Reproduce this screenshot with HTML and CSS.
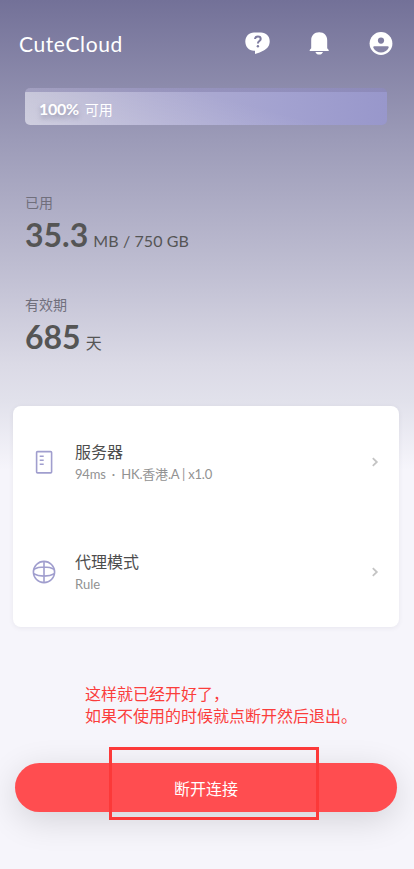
FILE: index.html
```html
<!DOCTYPE html>
<html lang="zh-CN">
<head>
<meta charset="utf-8">
<meta name="viewport" content="width=device-width, initial-scale=1">
<title>CuteCloud</title>
<link rel="stylesheet" href="styles.css">
</head>
<body>
<main class="app">
  <header class="header">
    <h1 class="brand">CuteCloud</h1>
    <nav class="actions">
      <svg width="26" height="26" viewBox="0 0 26 26"><path fill="#fff" d="M10 2.600h7c5 0 8.700 3.500 8.700 8.600 0 4.500-2.300 7.300-6 9.200-2.500 1.300-5.400 2.600-8.700 3.600v-3.200h-1C4.800 20.800 1.300 16.700 1.300 11.600 1.300 6.500 5 2.600 10 2.600z"/><path class="mark" d="M11 9c.2-1.700 1.300-2.500 2.900-2.500 1.700 0 2.800.9 2.800 2.400 0 2.100-2.800 2.100-2.800 4.500"/><circle cx="13.900" cy="16.200" r="1.200" fill="#7e7ca0"/></svg>
      <svg width="26" height="26" viewBox="0 0 26 26"><path fill="#fff" d="M13.200 2.200c-5 0-8 3.300-8 8v8l-1.500 1.700v1.200h19v-1.200l-1.500-1.700v-8c0-4.700-3-8-8-8zM9.400 22H17c-.6 1.700-2 2.600-3.800 2.600s-3.200-.9-3.800-2.600z"/></svg>
      <svg width="26" height="26" viewBox="0 0 26 26"><circle cx="13" cy="13.500" r="11.400" fill="#fff"/><circle cx="13" cy="10.600" r="3.100" fill="#807ea1"/><path fill="#8583a5" d="M6.300 16.300h13.400c1 0 1.300.8.8 1.600-1.500 2.800-4.300 4.500-7.500 4.500s-6-1.700-7.500-4.500c-.5-.8-.2-1.600.8-1.600z"/></svg>
    </nav>
  </header>

  <section class="quota"><strong>100%</strong><span>可用</span></section>

  <section class="stats">
    <div class="stat">
      <p class="label">已用</p>
      <p class="value"><strong class="used">35.3</strong><span class="total">MB / 750 GB</span></p>
    </div>
    <div class="stat">
      <p class="label">有效期</p>
      <p class="value"><strong>685</strong><span class="days">天</span></p>
    </div>
  </section>

  <section class="card">
    <div class="row">
      <svg class="icon" width="26" height="26" viewBox="0 0 26 26"><rect x="5.600" y="2.600" width="15" height="21.300" rx="1"/><path d="M8.700 7.200h4M8.700 11.200h4M8.700 15.200h4"/></svg>
      <div class="info"><h2>服务器</h2><p class="server">94ms&nbsp; ·&nbsp; HK.香港.A | x1.0</p></div>
      <svg class="chevron" width="8" height="10" viewBox="0 0 8 10"><path d="M1.800 1.200 5.800 5 1.800 8.800"/></svg>
    </div>
    <div class="row">
      <svg class="icon" width="26" height="26" viewBox="0 0 26 26"><circle cx="13" cy="13" r="10.600"/><path d="M13 2.400v21.200M2.800 10.200C8 7.300 18 7.300 23.200 10.200M2.600 14.800c5.400 3.100 15.400 3.100 20.800 0"/></svg>
      <div class="info"><h2>代理模式</h2><p>Rule</p></div>
      <svg class="chevron" width="8" height="10" viewBox="0 0 8 10"><path d="M1.800 1.200 5.800 5 1.800 8.800"/></svg>
    </div>
  </section>

  <p class="note">这样就已经开好了，<br>如果不使用的时候就点断开然后退出。</p>

  <div class="connect">
    <button class="disconnect" type="button">断开连接</button>
    <div class="highlight"></div>
  </div>
</main>
</body>
</html>
```
FILE: styles.css
```css
* { box-sizing: border-box; }
body, h1, h2, p { margin: 0; }
body {
  height: 869px;
  overflow: hidden;
  font-family: Lato, "Noto Sans CJK SC", sans-serif;
  background: #f6f5fb linear-gradient(#737198 0, #9c9bb8 140px, #c2c1d4 280px, #dbdae6 365px, #e1e1eb 400px, #f6f5fb 470px) no-repeat;
}
.app { display: flex; flex-direction: column; height: 869px; }
.header {
  display: flex;
  align-items: center;
  justify-content: space-between;
  height: 88px;
  padding: 0 20px 2px 19px;
}
.brand { color: #fff; font: 400 21px/30px Lato, sans-serif; letter-spacing: .6px; padding-top: 1px; }
.actions { display: flex; gap: 36px; }
.mark { fill: none; stroke: #7e7ca0; stroke-width: 2; }
.quota {
  display: flex;
  align-items: center;
  height: 37px;
  margin: 0 27px 0 25px;
  padding: 4px 14px 0;
  border-radius: 5px;
  color: #fff;
  background:
    linear-gradient(rgba(132, 128, 172, .55), rgba(132, 128, 172, .55)) 0 0 / 100% 4px no-repeat,
    linear-gradient(15deg, rgba(255, 255, 255, .25), transparent 60%),
    linear-gradient(90deg, #bfbed4, #b0aed2 35%, #a3a2d0 70%, #9897cb);
}
.quota strong { font-size: 16px; font-weight: 700; letter-spacing: -.3px; text-shadow: 0 3px 5px rgba(70, 70, 100, .4); }
.quota span { margin-left: 6px; font-size: 14px; }
.stats { display: flex; flex-direction: column; gap: 24px; padding: 68px 25px 0; color: #555; }
.stat { height: 78px; }
.label { font-size: 14px; line-height: 20px; color: #706f7c; }
.value { display: flex; align-items: baseline; height: 44px; line-height: 44px; }
.value strong { font-size: 32px; font-weight: 700; letter-spacing: 0; }
.total { margin-left: 5px; font-size: 16px; letter-spacing: .1px; }
.days { margin-left: 5px; font-size: 16px; }
.card {
  height: 221px;
  flex: none;
  margin: 33px 15px 0 13px;
  border-radius: 8px;
  background: #fff;
  box-shadow: 0 1px 5px rgba(60, 60, 90, .08);
}
.row { display: flex; align-items: center; height: 110.500px; padding: 1px 20px 0 18px; }
.icon { fill: none; stroke: #a09ece; stroke-width: 1.6; }
.info { flex: 1; margin-left: 18px; }
.info h2 { color: #4d4d4d; font-size: 16px; font-weight: 400; line-height: 24px; }
.info p { color: #929292; font-size: 13px; line-height: 20px; }
.info .server { letter-spacing: -.2px; }
.chevron { fill: none; stroke: #c4c4c4; stroke-width: 1.8; }
.note { margin: 56px 0 0 85px; color: #fb3d3c; font-size: 16px; line-height: 22px; white-space: nowrap; }
.connect { position: relative; margin: 36px 17px 0 15px; }
.disconnect {
  display: block;
  width: 100%;
  height: 49px;
  padding: 0;
  border: 0;
  border-radius: 25px;
  color: #fff;
  font: 16px/24px "Noto Sans CJK SC", sans-serif;
  background: #ff4d50;
  box-shadow: 0 8px 34px rgba(0, 0, 0, .14);
}
.highlight { position: absolute; left: 94px; top: -16px; width: 210px; height: 73px; border: 3px solid #fc3939; }
```
